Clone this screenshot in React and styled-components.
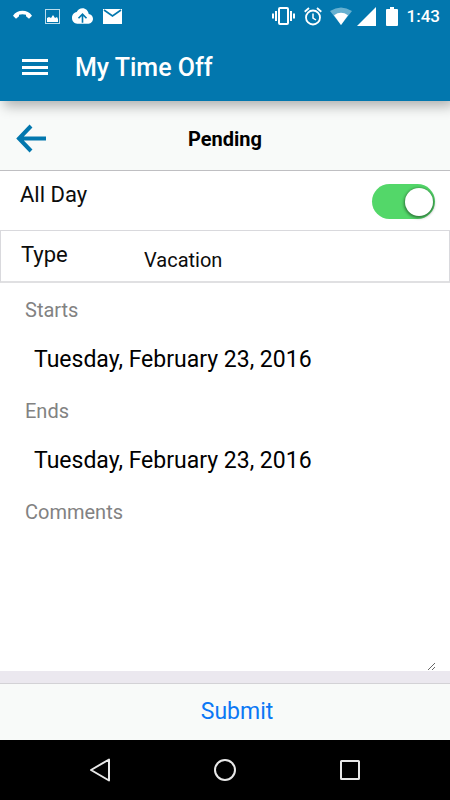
import React, { useState } from "react";
import styled, { createGlobalStyle } from "styled-components";

const GlobalStyle = createGlobalStyle`
  * { box-sizing: border-box; }
  body { margin: 0; background: #fff; }
  body, button, input, select, textarea { font-family: Roboto, "Liberation Sans", sans-serif; }
`;

const Screen = styled.div`
  display: flex;
  flex-direction: column;
  min-height: 100vh;
  color: #0c0c0c;
`;

const Header = styled.header`
  background: #0277ae;
  color: #fff;
  box-shadow: 4px 5px 12px 0 rgba(0, 0, 0, 0.3);
  z-index: 1;
`;

const StatusBar = styled.div`
  display: flex;
  justify-content: space-between;
  align-items: center;
  height: 32px;
  padding: 0 10px 0 12px;
`;

const StatusGroup = styled.div`
  display: flex;
  align-items: center;
  gap: ${(p) => p.$gap}px;
`;

const Clock = styled.time`
  font-size: 17px;
  font-weight: 500;
  line-height: 32px;
`;

const AppBar = styled.div`
  display: flex;
  align-items: center;
  gap: 27px;
  height: 69px;
  padding: 2px 21px 0;
`;

const IconButton = styled.button`
  display: flex;
  align-items: center;
  justify-content: center;
  padding: 0;
  border: 0;
  background: none;
  color: inherit;
  cursor: pointer;
`;

const Title = styled.h1`
  margin: 0;
  font-size: 25px;
  font-weight: 500;
  line-height: 32px;
`;

const SubHeader = styled.div`
  display: grid;
  grid-template-columns: 32px 1fr 32px;
  align-items: center;
  height: 70px;
  padding: 6px 15px 0;
  background: #f8faf9;
  border-bottom: 1px solid #bfbfc2;
`;

const SubTitle = styled.h2`
  margin: 0;
  font-size: 20px;
  font-weight: 700;
  line-height: 24px;
  text-align: center;
  color: #000;
`;

const Form = styled.form`
  flex: 1;
  display: flex;
  flex-direction: column;
`;

const ToggleRow = styled.div`
  display: flex;
  justify-content: space-between;
  align-items: flex-start;
  height: 59px;
  padding: 10px 15px 0 20px;
`;

const FieldName = styled.label`
  font-size: 22px;
  line-height: 28px;
`;

const Switch = styled.input`
  appearance: none;
  display: flex;
  justify-content: ${(p) => (p.checked ? "flex-end" : "flex-start")};
  align-items: center;
  width: 63px;
  height: 35px;
  margin: 3px 0 0;
  padding: 2px;
  border-radius: 18px;
  background: ${(p) => (p.checked ? "#53d769" : "#d5d5d8")};
  cursor: pointer;

  &::before {
    content: "";
    width: 28px;
    height: 28px;
    border-radius: 50%;
    background: #fff;
    box-shadow: 0 1px 3px 1px rgba(0, 0, 0, 0.45);
  }
`;

const TypeRow = styled.div`
  display: grid;
  grid-template-columns: 122px 1fr;
  height: 53px;
  padding: 10px 20px 0;
  border: 1px solid #d9d9dd;
  border-bottom: 2px solid #e0e0e2;
`;

const TypeSelect = styled.select`
  appearance: none;
  height: 37px;
  padding: 0 1px;
  border: 0;
  background: none;
  color: inherit;
  font-size: 20px;
  line-height: 28px;
`;

const Details = styled.div`
  flex: 1;
  display: flex;
  flex-direction: column;
  padding: 12px 14px 0 25px;
`;

const DetailLabel = styled.label`
  font-size: 20px;
  line-height: 30px;
  color: #828282;
`;

const DateInput = styled.input`
  height: 71px;
  padding: 0 9px 2px;
  border: 0;
  background: none;
  color: #000;
  font-size: 23px;
`;

const Comments = styled.textarea`
  flex: 1;
  padding: 4px 9px;
  border: 0;
  background: none;
  color: #000;
  font-size: 20px;
  line-height: 28px;
  resize: vertical;
`;

const Footer = styled.footer`
  border-top: 12px solid #ebe8ef;
`;

const SubmitButton = styled.button`
  display: block;
  width: 100%;
  height: 57px;
  padding: 0 0 0 24px;
  border: 0;
  border-top: 1px solid #d3d2d6;
  background: #f8faf9;
  color: #0b78f5;
  font-size: 23px;
  line-height: 28px;
  cursor: pointer;
`;

const NavBar = styled.nav`
  display: flex;
  justify-content: center;
  align-items: center;
  gap: 93px;
  height: 60px;
  background: #000;
  color: #e8e8e8;
`;

const CallIcon = () => (
  <svg width="23" height="18" viewBox="0 0 23 18" fill="#fff" aria-hidden="true">
    <path d="M1 8.700C5 2.200 16 2.200 20 8.700L17 11.800L14 9.300V7.800Q10.500 6.700 7 7.800V9.300L4 11.800Z" />
  </svg>
);

const PictureIcon = () => (
  <svg width="17" height="15" viewBox="0 0 17 15" aria-hidden="true">
    <rect x=".5" y=".5" width="14" height="14" fill="none" stroke="#b9dcec" />
    <path d="M2 13V9L4 8L6 9L8 6L10 9L12 8L13 10V13Z" fill="#fff" />
  </svg>
);

const CloudIcon = () => (
  <svg width="21" height="16" viewBox="0 0 22 16" aria-hidden="true">
    <path d="M17.500 6C17 2.500 14.300 0 11 0C8.300 0 6 1.500 4.900 3.900C2 4.300 0 6.900 0 10C0 13.300 2.500 16 5.500 16H17.300C20 16 22 13.700 22 11C22 8.300 20 6.100 17.500 6Z" fill="#fff" />
    <path d="M11 15V6M6.800 10.300L11 6L15.200 10.300" fill="none" stroke="#0277ae" strokeWidth="1.700" />
  </svg>
);

const MailIcon = () => (
  <svg width="19" height="15" viewBox="0 0 19 15" aria-hidden="true">
    <path d="M0 0H19V15H0Z" fill="#fff" />
    <path d="M1 1L9.500 7L18 1" fill="none" stroke="#0277ae" strokeWidth="1.600" />
  </svg>
);

const VibrateIcon = () => (
  <svg width="27" height="18" viewBox="0 0 27 18" fill="none" stroke="#fff" aria-hidden="true">
    <rect x="7" y="1" width="9" height="16" rx="1" strokeWidth="2" />
    <path d="M1 6.500V11.500M4 4V14M19 4V14M22 6.500V11.500" strokeWidth="2" />
  </svg>
);

const AlarmIcon = () => (
  <svg width="21" height="19" viewBox="0 0 21 19" fill="none" stroke="#fff" aria-hidden="true">
    <circle cx="9" cy="10.500" r="7" strokeWidth="1.800" />
    <path d="M.7 4.700L5 1M17.300 4.700L13 1" strokeWidth="1.800" />
    <path d="M9 6.500V11L12 13" strokeWidth="1.500" />
  </svg>
);

const WifiIcon = () => (
  <svg width="22" height="18" viewBox="0 0 22 18" aria-hidden="true">
    <path d="M0 4Q11-3 22 4L11 18Z" fill="#67b0d0" />
    <path d="M4 8.200Q11 3.500 18 8.200L11 18Z" fill="#fff" />
  </svg>
);

const SignalIcon = () => (
  <svg width="24" height="19" viewBox="0 0 24 19" fill="#fff" aria-hidden="true">
    <path d="M0 19L19 0V19Z" />
  </svg>
);

const BatteryIcon = () => (
  <svg width="16" height="19" viewBox="0 0 16 19" fill="#fff" aria-hidden="true">
    <path d="M4 0H8V2H11Q12 2 12 3V18Q12 19 11 19H1Q0 19 0 18V3Q0 2 1 2H4Z" />
  </svg>
);

const MenuIcon = () => (
  <svg width="27" height="17" viewBox="0 0 27 17" fill="#fff" aria-hidden="true">
    <path d="M1 0H27V3H1ZM1 7H27V10H1ZM1 13H27V16H1Z" />
  </svg>
);

const BackArrowIcon = () => (
  <svg width="32" height="30" viewBox="0 0 32 30" fill="none" stroke="#0277ae" strokeWidth="4" aria-hidden="true">
    <path d="M16 2L4 14.500L16 27M4 14.500H31" />
  </svg>
);

const NavBackIcon = () => (
  <svg width="32" height="26" viewBox="0 0 32 26" fill="none" stroke="currentColor" strokeWidth="2" strokeLinejoin="round" aria-hidden="true">
    <path d="M25 2.500V23.500L7 13Z" />
  </svg>
);

const NavHomeIcon = () => (
  <svg width="32" height="26" viewBox="0 0 32 26" fill="none" stroke="currentColor" strokeWidth="2" aria-hidden="true">
    <circle cx="16" cy="13" r="10" />
  </svg>
);

const NavRecentIcon = () => (
  <svg width="32" height="26" viewBox="0 0 32 26" fill="none" stroke="currentColor" strokeWidth="2" aria-hidden="true">
    <rect x="7" y="4" width="18" height="18" rx=".5" />
  </svg>
);

export default function App() {
  const [allDay, setAllDay] = useState(true);
  const [starts, setStarts] = useState("Tuesday, February 23, 2016");
  const [ends, setEnds] = useState("Tuesday, February 23, 2016");

  return (
    <Screen>
      <GlobalStyle />
      <Header>
        <StatusBar>
          <StatusGroup $gap={10}>
            <CallIcon />
            <PictureIcon />
            <CloudIcon />
            <MailIcon />
          </StatusGroup>
          <StatusGroup $gap={5}>
            <VibrateIcon />
            <AlarmIcon />
            <WifiIcon />
            <SignalIcon />
            <BatteryIcon />
            <Clock>1:43</Clock>
          </StatusGroup>
        </StatusBar>
        <AppBar>
          <IconButton type="button" aria-label="Menu"><MenuIcon /></IconButton>
          <Title>My Time Off</Title>
        </AppBar>
      </Header>
      <SubHeader>
        <IconButton type="button" aria-label="Back"><BackArrowIcon /></IconButton>
        <SubTitle>Pending</SubTitle>
      </SubHeader>
      <Form onSubmit={(e) => e.preventDefault()}>
        <ToggleRow>
          <FieldName htmlFor="all-day">All Day</FieldName>
          <Switch
            id="all-day"
            type="checkbox"
            role="switch"
            checked={allDay}
            onChange={(e) => setAllDay(e.target.checked)}
          />
        </ToggleRow>
        <TypeRow>
          <FieldName htmlFor="type">Type</FieldName>
          <TypeSelect id="type">
            <option>Vacation</option>
          </TypeSelect>
        </TypeRow>
        <Details>
          <DetailLabel htmlFor="starts">Starts</DetailLabel>
          <DateInput id="starts" value={starts} onChange={(e) => setStarts(e.target.value)} />
          <DetailLabel htmlFor="ends">Ends</DetailLabel>
          <DateInput id="ends" value={ends} onChange={(e) => setEnds(e.target.value)} />
          <DetailLabel htmlFor="comments">Comments</DetailLabel>
          <Comments id="comments" />
        </Details>
        <Footer>
          <SubmitButton type="submit">Submit</SubmitButton>
        </Footer>
      </Form>
      <NavBar aria-label="System">
        <IconButton type="button" aria-label="System back"><NavBackIcon /></IconButton>
        <IconButton type="button" aria-label="Home"><NavHomeIcon /></IconButton>
        <IconButton type="button" aria-label="Recent apps"><NavRecentIcon /></IconButton>
      </NavBar>
    </Screen>
  );
}
